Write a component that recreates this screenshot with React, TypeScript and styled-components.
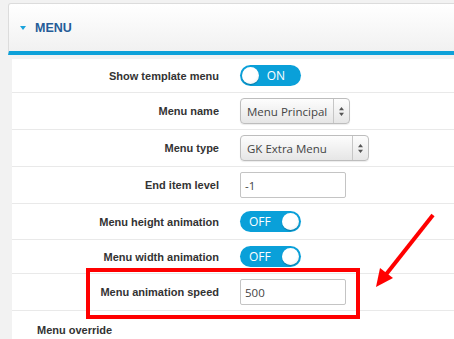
import React from "react";
import styled, { createGlobalStyle } from "styled-components";

const GlobalStyle = createGlobalStyle`
  html, body {
    margin: 0;
    padding: 0;
    background: #f2f2f2;
  }
`;

const Page = styled.div`
  position: relative;
  width: 454px;
  height: 339px;
  overflow: hidden;
  padding-top: 3px;
  box-sizing: border-box;
  font-family: "Liberation Sans", Arial, sans-serif;
`;

const Header = styled.div`
  margin-left: 8px;
  width: 480px;
  height: 47px;
  display: flex;
  align-items: center;
  gap: 9px;
  padding-left: 11px;
  border: 1px solid #dcdcdc;
  border-bottom: 4px solid #0ea1d9;
  border-radius: 3px 3px 0 0;
  background: linear-gradient(#ffffff, #f1f1f1);
`;

const Caret = styled.span`
  width: 0;
  height: 0;
  border-left: 3px solid transparent;
  border-right: 3px solid transparent;
  border-top: 4px solid #1aa3dc;
  margin-top: 1px;
`;

const Title = styled.h2`
  margin: 0;
  font-size: 12.5px;
  font-weight: bold;
  color: #255c98;
`;

const Panel = styled.div`
  margin: 4px 0 0 12px;
  background: #fff;
  height: 300px;
`;

const Row = styled.div<{ $h: number }>`
  position: relative;
  display: grid;
  grid-template-columns: 207px 1fr;
  column-gap: 21px;
  align-items: center;
  height: ${(p) => p.$h}px;
  border-bottom: 1px solid #e9e9e9;
`;

const Label = styled.label`
  text-align: right;
  font-size: 11px;
  font-weight: bold;
  color: #333;
`;

const Toggle = styled.div<{ $on: boolean }>`
  display: flex;
  flex-direction: ${(p) => (p.$on ? "row" : "row-reverse")};
  align-items: center;
  justify-content: space-between;
  width: 61px;
  height: 21px;
  box-sizing: border-box;
  padding: 0 ${(p) => (p.$on ? "16px" : "2px")} 0 ${(p) => (p.$on ? "2px" : "9px")};
  border-radius: 11px;
  background: #0aa0d9;
  color: #fff;
  font-family: "Open Sans", "DejaVu Sans", sans-serif;
  font-size: 12px;
`;

const Knob = styled.span`
  width: 17px;
  height: 17px;
  border-radius: 50%;
  background: radial-gradient(circle at 40% 35%, #ffffff 55%, #e4e4e4);
  box-shadow: 0 1px 1px rgba(0, 0, 0, 0.25);
`;

const Select = styled.div<{ $w: number }>`
  display: flex;
  align-items: stretch;
  width: ${(p) => p.$w}px;
  height: 26px;
  box-sizing: border-box;
  border: 1px solid #bdbdbd;
  border-radius: 4px;
  background: linear-gradient(#fdfdfd, #e6e6e6);
  box-shadow: 0 1px 1px rgba(0, 0, 0, 0.08);
  font-family: "Open Sans", "DejaVu Sans", sans-serif;
  font-size: 11.5px;
  color: #444;
`;

const SelectValue = styled.span`
  flex: 1;
  display: flex;
  align-items: center;
  padding-left: 6px;
  white-space: nowrap;
  overflow: hidden;
`;

const SelectArrows = styled.span`
  width: 15px;
  border-left: 1px solid #c6c6c6;
  display: flex;
  align-items: center;
  justify-content: center;
`;

const TextInput = styled.div`
  display: flex;
  align-items: center;
  width: 106px;
  height: 26px;
  box-sizing: border-box;
  padding-left: 4px;
  border: 1px solid #c4c4c4;
  border-radius: 2px;
  background: #fff;
  font-family: "Open Sans", "DejaVu Sans", sans-serif;
  font-size: 11.5px;
  color: #444;
`;

const Highlight = styled.div`
  position: absolute;
  left: 74px;
  top: -6px;
  width: 274px;
  height: 51px;
  box-sizing: border-box;
  border: 4px solid #ff0000;
`;

const Section = styled.div`
  padding: 13px 0 0 25px;
  font-size: 11px;
  font-weight: bold;
  color: #333;
`;

const Arrow = styled.svg`
  position: absolute;
  left: 370px;
  top: 210px;
`;

const UpDown = () => (
  <svg width="7" height="11" viewBox="0 0 7 11">
    <path d="M3.5 1 L6 4.2 H1 Z M3.5 10 L6 6.8 H1 Z" fill="#555" />
  </svg>
);

const fields = [
  { label: "Show template menu", h: 33, kind: "on" },
  { label: "Menu name", h: 36, kind: "select", value: "Menu Principal", w: 110 },
  { label: "Menu type", h: 36, kind: "select", value: "GK Extra Menu", w: 129 },
  { label: "End item level", h: 36, kind: "input", value: "-1" },
  { label: "Menu height animation", h: 35, kind: "off" },
  { label: "Menu width animation", h: 33, kind: "off" },
  { label: "Menu animation speed", h: 36, kind: "input", value: "500", mark: true },
];

export default function App() {
  return (
    <Page>
      <GlobalStyle />
      <Header>
        <Caret />
        <Title>MENU</Title>
      </Header>
      <Panel>
        {fields.map((f) => (
          <Row key={f.label} $h={f.h}>
            <Label>{f.label}</Label>
            <div>
              {f.kind === "on" && (
                <Toggle $on>
                  <Knob />
                  <span>ON</span>
                </Toggle>
              )}
              {f.kind === "off" && (
                <Toggle $on={false}>
                  <Knob />
                  <span>OFF</span>
                </Toggle>
              )}
              {f.kind === "select" && (
                <Select $w={f.w!}>
                  <SelectValue>{f.value}</SelectValue>
                  <SelectArrows>
                    <UpDown />
                  </SelectArrows>
                </Select>
              )}
              {f.kind === "input" && <TextInput>{f.value}</TextInput>}
            </div>
            {f.mark && <Highlight />}
          </Row>
        ))}
        <Section>Menu override</Section>
      </Panel>
      <Arrow width="70" height="82" viewBox="0 0 70 82">
        <line x1="63" y1="5" x2="14" y2="67" stroke="#ff0000" strokeWidth="4" />
        <path d="M6 77 L10 58 L23 68 Z" fill="#ff0000" />
      </Arrow>
    </Page>
  );
}
